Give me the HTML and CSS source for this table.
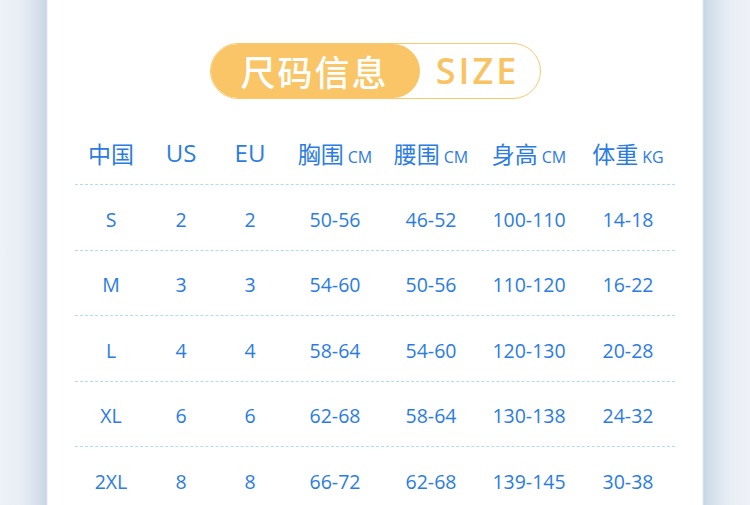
FILE: index.html
```html
<!DOCTYPE html>
<html lang="zh">
<head>
<meta charset="utf-8">
<link rel="stylesheet" href="styles.css">
</head>
<body>
<div class="page">
  <div class="side side-left"></div>
  <div class="panel">
    <div class="title-wrap">
      <div class="pill">
        <div class="pill-cn">尺码信息</div>
        <div class="pill-en">SIZE</div>
      </div>
    </div>
    <div class="table">
      <div class="row head">
        <div class="c c1">中国</div>
        <div class="c c2">US</div>
        <div class="c c3">EU</div>
        <div class="c c4">胸围<span class="unit">CM</span></div>
        <div class="c c5">腰围<span class="unit">CM</span></div>
        <div class="c c6">身高<span class="unit">CM</span></div>
        <div class="c c7">体重<span class="unit">KG</span></div>
      </div>
      <div class="row">
        <div class="c c1">S</div><div class="c c2">2</div><div class="c c3">2</div>
        <div class="c c4">50-56</div><div class="c c5">46-52</div><div class="c c6">100-110</div><div class="c c7">14-18</div>
      </div>
      <div class="row">
        <div class="c c1">M</div><div class="c c2">3</div><div class="c c3">3</div>
        <div class="c c4">54-60</div><div class="c c5">50-56</div><div class="c c6">110-120</div><div class="c c7">16-22</div>
      </div>
      <div class="row">
        <div class="c c1">L</div><div class="c c2">4</div><div class="c c3">4</div>
        <div class="c c4">58-64</div><div class="c c5">54-60</div><div class="c c6">120-130</div><div class="c c7">20-28</div>
      </div>
      <div class="row">
        <div class="c c1">XL</div><div class="c c2">6</div><div class="c c3">6</div>
        <div class="c c4">62-68</div><div class="c c5">58-64</div><div class="c c6">130-138</div><div class="c c7">24-32</div>
      </div>
      <div class="row last">
        <div class="c c1">2XL</div><div class="c c2">8</div><div class="c c3">8</div>
        <div class="c c4">66-72</div><div class="c c5">62-68</div><div class="c c6">139-145</div><div class="c c7">30-38</div>
      </div>
    </div>
  </div>
  <div class="side side-right"></div>
</div>
</body>
</html>
```

FILE: styles.css
```css
* { box-sizing: border-box; }
html, body { margin: 0; padding: 0; }
body {
  width: 750px;
  height: 505px;
  overflow: hidden;
  font-family: "Open Sans", "Noto Sans CJK SC", sans-serif;
  background: #fff;
}
.page {
  display: flex;
  height: 505px;
}
.side {
  width: 48px;
  flex: none;
}
.side-left {
  background: linear-gradient(90deg, #eef2f7 0, #e8edf4 22px, #d3deea 40px, #c7d5e5 46px, #dfe7f0 47px, #fff 48px);
}
.side-right {
  background: linear-gradient(270deg, #eef2f7 0, #e8edf4 22px, #d3deea 40px, #c7d5e5 46px, #dfe7f0 47px, #fff 48px);
}
.panel {
  flex: 1;
  background: #fff;
  padding-top: 43px;
}
.title-wrap {
  display: flex;
  justify-content: center;
}
.pill {
  display: flex;
  width: 331px;
  height: 56px;
  border: 1.5px solid #f9c86c;
  border-radius: 28px;
  background: #fff;
  overflow: hidden;
}
.pill-cn {
  width: 210px;
  height: 100%;
  background: #f9c566;
  border-radius: 28px;
  color: #fff;
  font-family: "Noto Sans CJK SC", sans-serif;
  font-weight: 500;
  font-size: 35px;
  line-height: 53px;
  text-align: center;
  letter-spacing: 2px;
  margin-left: -1px;
}
.pill-en {
  flex: 1;
  color: #f8c363;
  font-family: "Open Sans", sans-serif;
  font-weight: 600;
  font-size: 36px;
  line-height: 53px;
  text-align: center;
  letter-spacing: 3px;
  padding-right: 4px;
}
.table {
  margin: 22px 27px 0;
  width: 600px;
}
.row {
  display: flex;
  height: 65.5px;
  align-items: center;
  padding-top: 4px;
  border-bottom: 1px dashed #b3dcf2;
  color: #2b7ce2;
  font-size: 19.5px;
  font-weight: 500;
}
.row.head {
  height: 64px;
  padding-top: 0;
  font-size: 23px;
  font-weight: 400;
}
.row.last { border-bottom: none; }
.c {
  text-align: center;
  white-space: nowrap;
}
.head .c {
  font-family: "Noto Sans CJK SC", sans-serif;
}
.head .c2, .head .c3 {
  font-family: "Open Sans", sans-serif;
  font-size: 24px;
}
.unit {
  font-family: "Open Sans", sans-serif;
  font-size: 16px;
  margin-left: 4px;
}
.c1 { width: 72px; }
.c2 { width: 68px; }
.c3 { width: 70px; }
.c4 { width: 100px; }
.c5 { width: 92px; }
.c6 { width: 104px; }
.c7 { width: 94px; }
```
